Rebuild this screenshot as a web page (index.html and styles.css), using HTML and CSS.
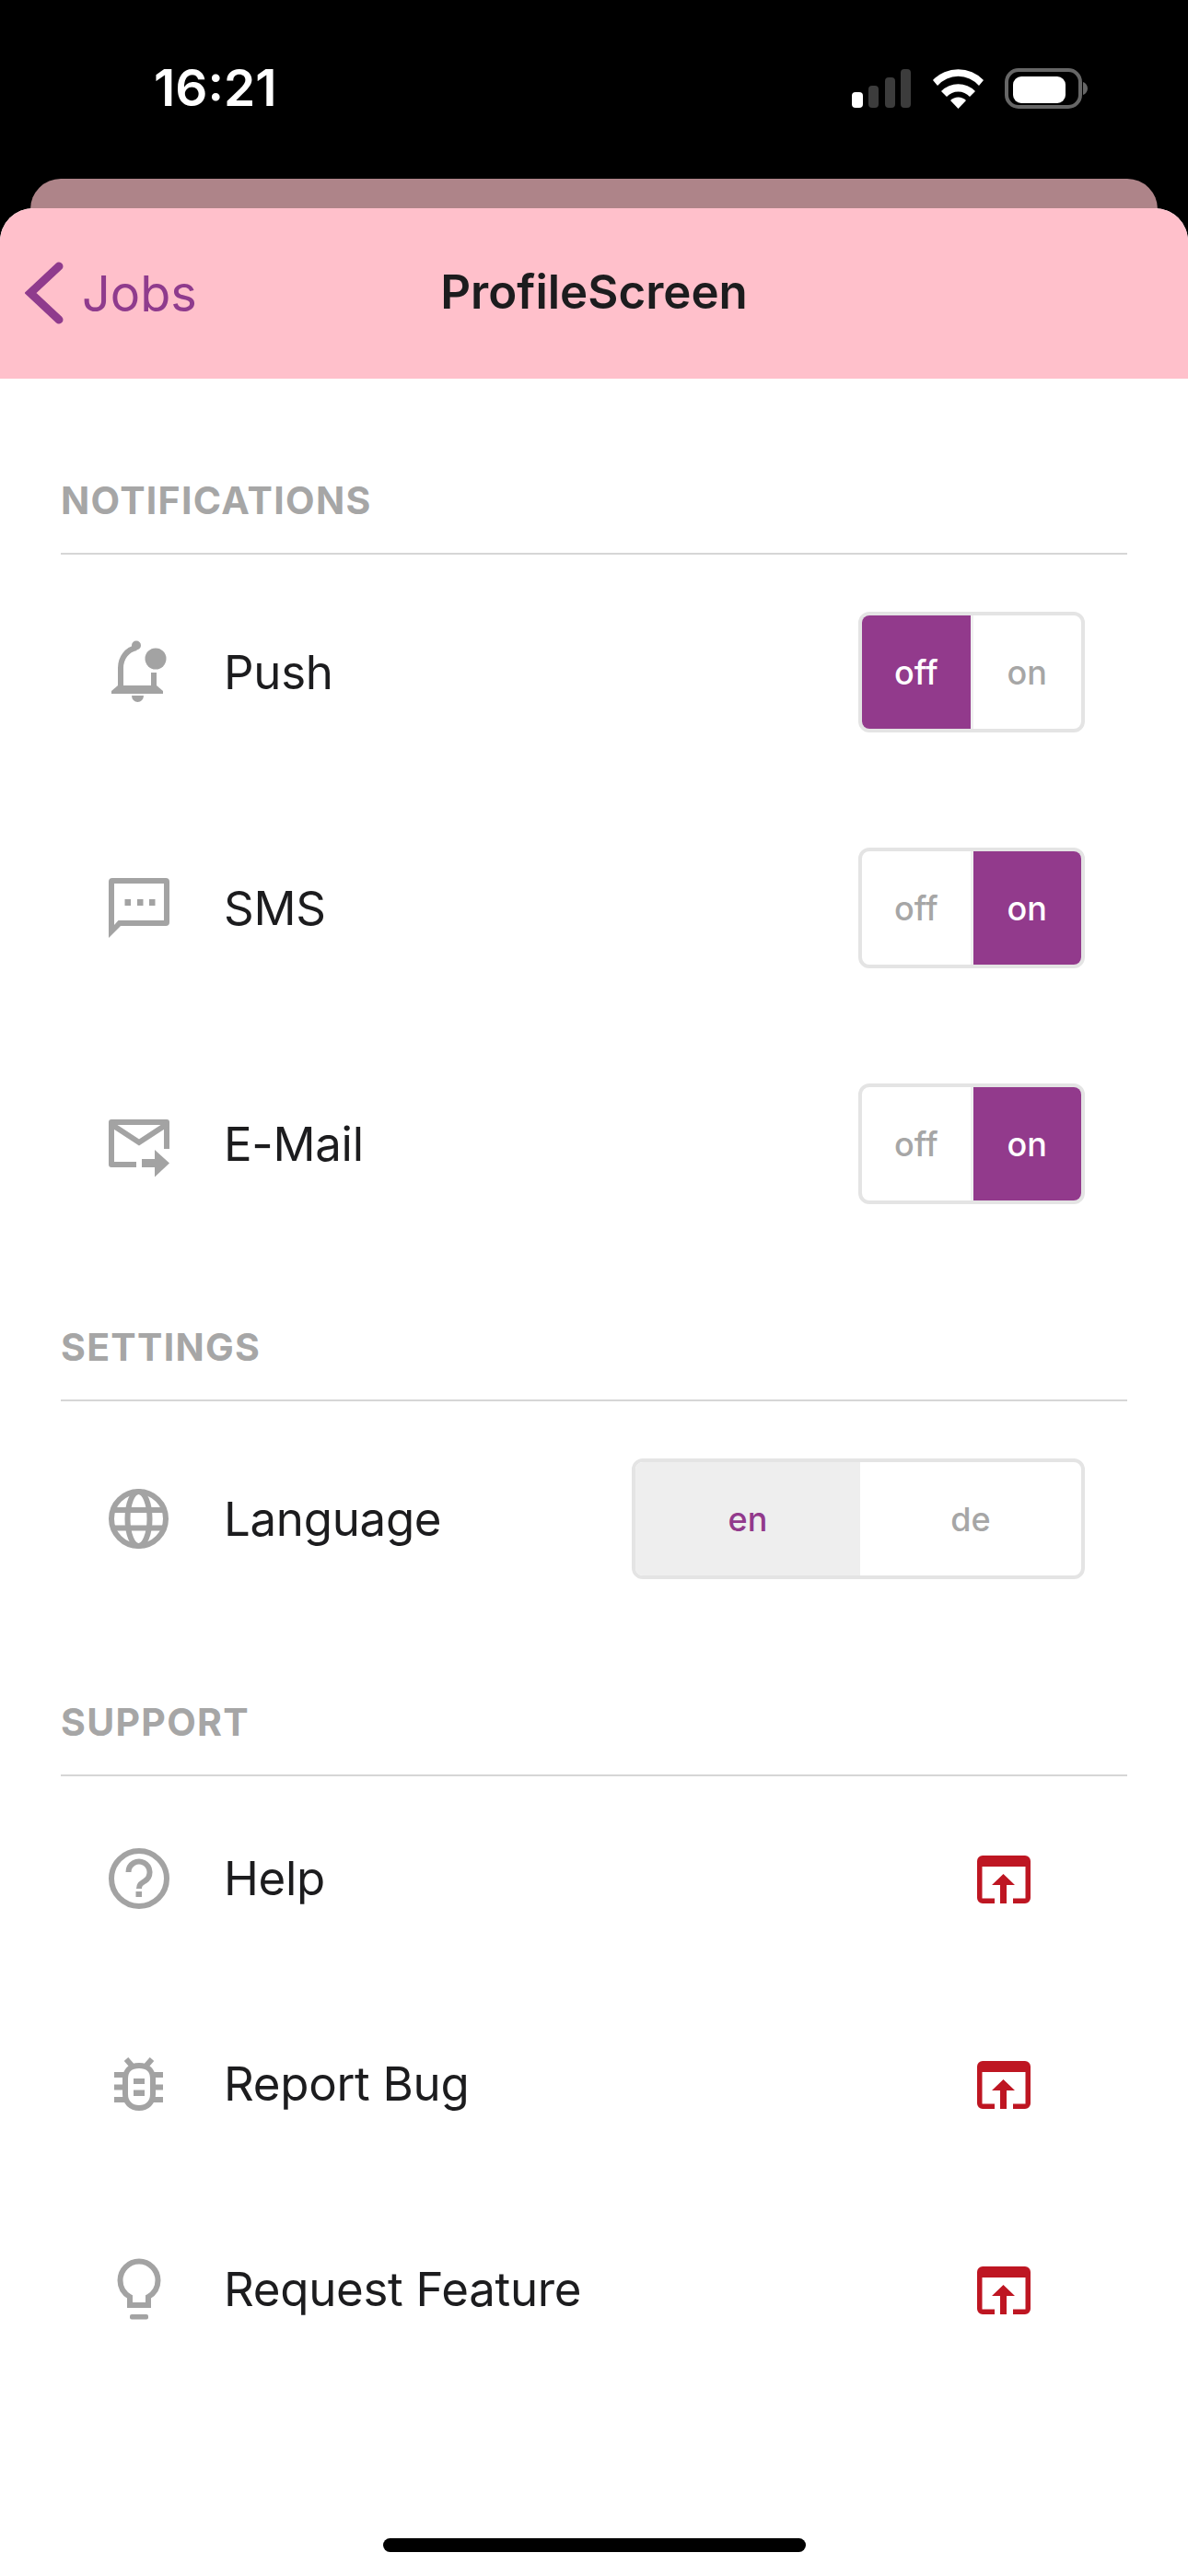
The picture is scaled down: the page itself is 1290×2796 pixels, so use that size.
FILE: index.html
```html
<!DOCTYPE html>
<html>
<head>
	<title>ProfileScreen</title>
	<link rel="stylesheet" href="styles.css">
</head>
<body>
	<div class="status-bar">
		<span class="time">16:21</span>
		<svg class="status-icons" width="260" height="46" viewBox="0 0 260 46">
			<rect x="4" y="27" width="12" height="17" rx="4" fill="#fff"/>
			<rect x="22" y="20" width="11" height="24" rx="4" fill="#3c3c3c"/>
			<rect x="40" y="11" width="11" height="33" rx="4" fill="#3c3c3c"/>
			<rect x="57" y="2" width="11" height="42" rx="4" fill="#3c3c3c"/>
			<path d="M92 14 A38 38 0 0 1 147 14 L142 20 A30 30 0 0 0 97 20 Z" fill="#fff"/>
			<path d="M101 26 A26 26 0 0 1 138 26 L132 32 A17 17 0 0 0 107 32 Z" fill="#fff"/>
			<path d="M111 36 A12 12 0 0 1 128 36 L119.500 45 Z" fill="#fff"/>
			<rect x="172" y="3" width="80" height="40" rx="13" fill="none" stroke="#666" stroke-width="4"/>
			<rect x="179" y="10" width="57" height="29" rx="9" fill="#fff"/>
			<path d="M255 16 C258 17 260 20 260 23 C260 26 258 29 255 30 Z" fill="#666"/>
		</svg>
	</div>

	<div class="back-sheet"></div>

	<div class="sheet">
		<div class="nav">
			<div class="back">
				<svg width="46" height="70" viewBox="0 0 46 70"><path d="M37 6 L6 35 L37 64" fill="none" stroke="#8f3b8d" stroke-width="9" stroke-linecap="round" stroke-linejoin="miter"/></svg>
				<span>Jobs</span>
			</div>
			<div class="nav-title">ProfileScreen</div>
		</div>

		<div class="content">
			<div class="section first">
				<div class="section-title">NOTIFICATIONS</div>
				<div class="row">
					<svg class="icon" viewBox="0 0 80 80">
						<path d="M20 56 V35 C20 24 27 15 37 13" class="line"/>
						<circle cx="37" cy="10.500" r="5" class="solid"/>
						<circle cx="58" cy="25" r="11.500" class="solid"/>
						<rect x="53" y="40" width="6" height="15" class="solid"/>
						<path d="M10 63 H66 V60 L59 54 H17 L10 60 Z" class="solid"/>
						<path d="M32 65 H45 A6.500 7 0 0 1 32 65 Z" class="solid"/>
					</svg>
					<span class="label">Push</span>
					<div class="toggle">
						<div class="seg active">off</div>
						<div class="seg">on</div>
					</div>
				</div>
				<div class="row">
					<svg class="icon" viewBox="0 0 80 80">
						<path fill-rule="evenodd" d="M11 7 H69 A4 4 0 0 1 73 11 V55 A4 4 0 0 1 69 59 H20 L7 72 V11 A4 4 0 0 1 11 7 Z M13 13 V58 L17.500 53 H67 V13 Z" class="solid"/>
						<rect x="24.500" y="30" width="6.500" height="7" class="solid"/>
						<rect x="38" y="30" width="6.500" height="7" class="solid"/>
						<rect x="51" y="30" width="6.500" height="7" class="solid"/>
					</svg>
					<span class="label">SMS</span>
					<div class="toggle">
						<div class="seg">off</div>
						<div class="seg active">on</div>
					</div>
				</div>
				<div class="row">
					<svg class="icon" viewBox="0 0 80 80">
						<path d="M37 62 H10 V16 H70 V45" class="line round"/>
						<path d="M11 19 L40 38 L69 19" class="line"/>
						<path d="M43 56 H57 V46 L73 60.500 L57 75.500 V65 H43 Z" class="solid"/>
					</svg>
					<span class="label">E-Mail</span>
					<div class="toggle">
						<div class="seg">off</div>
						<div class="seg active">on</div>
					</div>
				</div>
			</div>

			<div class="section">
				<div class="section-title">SETTINGS</div>
				<div class="row">
					<svg class="icon" viewBox="0 0 80 80">
						<circle cx="39.500" cy="39.500" r="29.500" class="line"/>
						<ellipse cx="39.500" cy="39.500" rx="12" ry="29.500" class="line"/>
						<path d="M12 30 H67 M12 49.500 H67" class="line"/>
					</svg>
					<span class="label">Language</span>
					<div class="toggle wide">
						<div class="seg current">en</div>
						<div class="seg">de</div>
					</div>
				</div>
			</div>

			<div class="section">
				<div class="section-title">SUPPORT</div>
				<div class="row short">
					<svg class="icon" viewBox="0 0 80 80">
						<circle cx="40" cy="39" r="30" class="line"/>
						<path d="M28.500 32 A11.500 11.500 0 1 1 46.500 41.500 C41 45 40 46 40 50" class="line"/>
						<rect x="36.500" y="53" width="6.500" height="6" class="solid"/>
					</svg>
					<span class="label">Help</span>
					<svg class="external" viewBox="0 0 58 52"><path fill-rule="evenodd" d="M6 0 H52 A6 6 0 0 1 58 6 V46 A6 6 0 0 1 52 52 H39 V46.500 H52.500 V12 H5.500 V46.500 H19 V52 H6 A6 6 0 0 1 0 46 V6 A6 6 0 0 1 6 0 Z" class="red"/><path d="M28.500 20 L41 32 H32 V52 H25 V32 H16 Z" class="red"/></svg>
				</div>
				<div class="row short">
					<svg class="icon" viewBox="0 0 80 80">
						<path d="M40 19 C30 19 25 25 25 33 V50 C25 59 31 65 40 65 C49 65 55 59 55 50 V33 C55 25 50 19 40 19 Z" class="line"/>
						<path d="M26 12 L33 20 M54 12 L47 20 M13 29 H24 M13 42.500 H24 M13 56 H24 M56 29 H66 M56 42.500 H66 M56 56 H66" class="line"/>
						<rect x="34" y="33" width="12" height="6" class="solid"/>
						<rect x="34" y="45.500" width="12" height="6.500" class="solid"/>
					</svg>
					<span class="label">Report Bug</span>
					<svg class="external" viewBox="0 0 58 52"><path fill-rule="evenodd" d="M6 0 H52 A6 6 0 0 1 58 6 V46 A6 6 0 0 1 52 52 H39 V46.500 H52.500 V12 H5.500 V46.500 H19 V52 H6 A6 6 0 0 1 0 46 V6 A6 6 0 0 1 6 0 Z" class="red"/><path d="M28.500 20 L41 32 H32 V52 H25 V32 H16 Z" class="red"/></svg>
				</div>
				<div class="row short">
					<svg class="icon" viewBox="0 0 80 80">
						<path d="M30 47 C23 43 19.500 36 19.500 29 A20.500 20.500 0 0 1 60.500 29 C60.500 36 57 43 50 47 V56 H30 Z" class="line"/>
						<rect x="30" y="66" width="20" height="5.500" rx="2" class="solid"/>
					</svg>
					<span class="label">Request Feature</span>
					<svg class="external" viewBox="0 0 58 52"><path fill-rule="evenodd" d="M6 0 H52 A6 6 0 0 1 58 6 V46 A6 6 0 0 1 52 52 H39 V46.500 H52.500 V12 H5.500 V46.500 H19 V52 H6 A6 6 0 0 1 0 46 V6 A6 6 0 0 1 6 0 Z" class="red"/><path d="M28.500 20 L41 32 H32 V52 H25 V32 H16 Z" class="red"/></svg>
				</div>
			</div>

			<div class="home-indicator"></div>
		</div>
	</div>
</body>
</html>
```

FILE: styles.css
```css
html, body {
	margin: 0;
	padding: 0;
}

body {
	width: 1290px;
	height: 2796px;
	overflow: hidden;
	background-color: #000;
	font-family: Inter, "Liberation Sans", sans-serif;
}

.status-bar {
	display: flex;
	justify-content: space-between;
	align-items: center;
	height: 194px;
	padding: 0 109px 0 167px;
	box-sizing: border-box;
}

.time {
	margin-top: -4px;
	color: #fff;
	font-size: 55px;
	font-weight: 600;
}

.status-icons {
	margin-top: -2px;
}

.back-sheet {
	height: 70px;
	margin: 0 33px -38px;
	border-radius: 33px 33px 0 0;
	background-color: #ae8489;
}

.sheet {
	position: relative;
	height: 2570px;
	border-radius: 36px 36px 0 0;
	background-color: #fff;
	overflow: hidden;
}

.nav {
	display: flex;
	justify-content: center;
	align-items: center;
	position: relative;
	height: 185px;
	background-color: #ffc0cb;
}

.nav-title {
	margin-top: -4px;
	color: #1c1c1e;
	font-size: 51px;
	font-weight: 600;
}

.back {
	display: flex;
	align-items: center;
	gap: 16px;
	position: absolute;
	left: 27px;
	top: 57px;
	color: #8f3b8d;
	font-size: 54px;
}

.content {
	padding: 0 66px;
}

.section {
	padding-top: 151px;
}

.section.first {
	padding-top: 191px;
}

.section-title {
	margin-top: -92px;
	height: 90px;
	border-bottom: 2px solid #d6d6d6;
	color: #a6a6a6;
	font-size: 41px;
	font-weight: 700;
	line-height: 66px;
	letter-spacing: 1.300px;
}

.row {
	display: flex;
	align-items: center;
	height: 256px;
	padding: 0 46px 0 45px;
}

.row.short {
	height: 223px;
}

.icon {
	flex: none;
	width: 80px;
	height: 80px;
	margin-right: 52px;
}

.solid {
	fill: #a3a3a3;
}

.line {
	fill: none;
	stroke: #a3a3a3;
	stroke-width: 6;
}

.line.round {
	stroke-linejoin: round;
}

.red {
	fill: #be1622;
}

.label {
	flex: 1;
	margin-top: -2px;
	color: #1c1c1e;
	font-size: 51px;
	letter-spacing: -0.300px;
}

.toggle {
	display: flex;
	width: 246px;
	height: 131px;
	margin-top: -1px;
	border: 4px solid #e4e4e4;
	border-radius: 12px;
	box-sizing: border-box;
	overflow: hidden;
}

.toggle.wide {
	width: 492px;
}

.seg {
	display: flex;
	flex: 1;
	justify-content: center;
	align-items: center;
	color: #a6a6a6;
	font-size: 36px;
	font-weight: 500;
}

.seg:first-child {
	border-right: 3px solid #f0f0f0;
}

.wide .seg:first-child {
	flex: none;
	width: 244px;
	border-right: none;
}

.seg.active {
	background-color: #923a8c;
	color: #fff;
}

.seg.current {
	background-color: #eee;
	color: #923a8c;
}

.external {
	flex: none;
	width: 58px;
	height: 52px;
	margin-right: 59px;
}

.home-indicator {
	position: absolute;
	left: 416px;
	bottom: 26px;
	width: 459px;
	height: 15px;
	border-radius: 8px;
	background-color: #000;
}
```
